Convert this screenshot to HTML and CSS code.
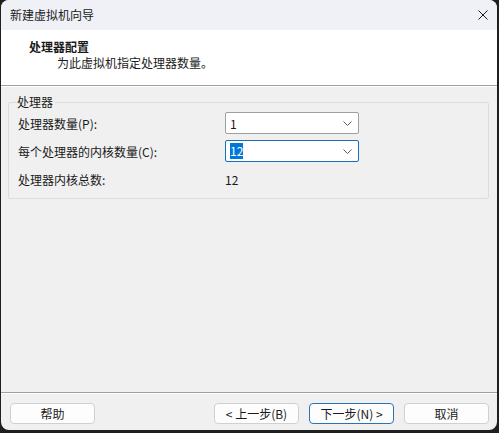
FILE: index.html
```html
<!DOCTYPE html>
<html lang="zh-CN">
<head>
  <meta charset="UTF-8" />
  <title>新建虚拟机向导</title>
  <link rel="stylesheet" href="styles.css">
</head>
<body>
  <div class="window">
    <div class="titlebar">
      <span>新建虚拟机向导</span>
      <svg class="close" width="10" height="10" viewBox="0 0 10 10">
        <path d="M0.5 0.5 L9.5 9.5 M9.5 0.5 L0.5 9.5" stroke="#1a1a1a" stroke-width="1" fill="none"/>
      </svg>
    </div>

    <div class="header">
      <div class="header-title">处理器配置</div>
      <div class="header-sub">为此虚拟机指定处理器数量。</div>
    </div>

    <div class="content">
      <fieldset class="group">
        <legend>处理器</legend>
        <div class="row">
          <label>处理器数量(P):</label>
          <div class="combo">
            <span>1</span>
            <svg width="9" height="5" viewBox="0 0 9 5"><path d="M0.5 0.5 L4.5 4.5 L8.5 0.5" stroke="#606060" fill="none"/></svg>
          </div>
        </div>
        <div class="row">
          <label>每个处理器的内核数量(C):</label>
          <div class="combo focused">
            <span class="selected">12</span>
            <svg width="9" height="5" viewBox="0 0 9 5"><path d="M0.5 0.5 L4.5 4.5 L8.5 0.5" stroke="#606060" fill="none"/></svg>
          </div>
        </div>
        <div class="row">
          <label>处理器内核总数:</label>
          <div class="value">12</div>
        </div>
      </fieldset>
    </div>

    <div class="footer">
      <button>帮助</button>
      <div class="spacer"></div>
      <button>&lt; 上一步(B)</button>
      <button class="primary">下一步(N) &gt;</button>
      <button>取消</button>
    </div>
  </div>
</body>
</html>
```

FILE: styles.css
```css
html, body {
  margin: 0;
  height: 100%;
}
body {
  background-color: #1f1f1f;
  font-family: "Noto Sans CJK SC", "Liberation Sans", sans-serif;
  font-size: 12px;
  color: #1a1a1a;
}
.window {
  margin: 0 2px 0 1px;
  height: 430px;
  border-radius: 8px;
  overflow: hidden;
  background-color: #f0f0f0;
  display: flex;
  flex-direction: column;
}
.titlebar {
  height: 30px;
  flex-shrink: 0;
  background-color: #eff1f6;
  display: flex;
  align-items: center;
  justify-content: space-between;
  padding: 0 9px 0 9px;
  line-height: 16px;
}
.header {
  background-color: #fff;
  height: 56px;
  flex-shrink: 0;
  box-sizing: border-box;
  padding: 9px 0 0 28px;
  border-bottom: 1px solid #a0a0a0;
  box-shadow: 0 1px 0 #fff;
  line-height: 16px;
}
.header-title {
  font-weight: bold;
}
.header-sub {
  margin-left: 28px;
}
.content {
  flex: 1;
  padding-top: 8px;
}
.group {
  margin: 0 8px 0 7px;
  padding: 2px 0 8px 9px;
  border: 1px solid #dcdcdc;
  border-radius: 2px;
}
.group legend {
  padding: 0 2px 0 0;
  margin-left: -1px;
  line-height: 16px;
}
.row {
  display: grid;
  grid-template-columns: 207px 134px;
  align-items: center;
  height: 22px;
  margin-bottom: 6px;
}
.row:last-child {
  margin-bottom: 0;
}
.combo {
  height: 22px;
  box-sizing: border-box;
  background-color: #fff;
  border: 1px solid #a0a0a0;
  border-radius: 2px;
  display: flex;
  align-items: center;
  justify-content: space-between;
  padding: 0 6px 0 4px;
}
.combo.focused {
  border-color: #1a6fb8;
}
.combo .selected {
  background-color: #0078d7;
  color: #fff;
  line-height: 16px;
}
.value {
  padding-left: 0;
}
.footer {
  flex-shrink: 0;
  border-top: 1px solid #a0a0a0;
  box-shadow: inset 0 1px 0 #fff;
  display: flex;
  gap: 10px;
  padding: 10px 8px 6px 9px;
}
.spacer {
  flex: 1;
}
button {
  width: 85px;
  height: 21px;
  padding: 0;
  font-family: inherit;
  font-size: 12px;
  color: #1a1a1a;
  background-color: #fdfdfd;
  border: 1px solid #d0d0d0;
  border-radius: 4px;
}
button.primary {
  border-color: #2a72b8;
}
```
